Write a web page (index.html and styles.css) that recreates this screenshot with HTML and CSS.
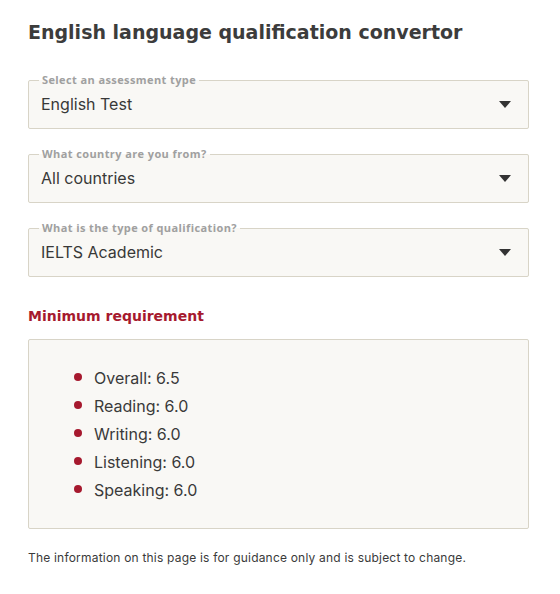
FILE: index.html
```html
<!DOCTYPE html>
<html lang="en">
<head>
<meta charset="utf-8">
<link rel="stylesheet" href="styles.css">
</head>
<body>
<main class="page">
  <h1 class="title">English language qualification convertor</h1>

  <fieldset class="field">
    <legend class="field-label">Select an assessment type</legend>
    <div class="field-row"><span class="field-value">English Test</span><span class="caret"></span></div>
  </fieldset>

  <fieldset class="field">
    <legend class="field-label">What country are you from?</legend>
    <div class="field-row"><span class="field-value">All countries</span><span class="caret"></span></div>
  </fieldset>

  <fieldset class="field">
    <legend class="field-label">What is the type of qualification?</legend>
    <div class="field-row"><span class="field-value">IELTS Academic</span><span class="caret"></span></div>
  </fieldset>

  <h2 class="req-title">Minimum requirement</h2>
  <div class="req-box">
    <ul class="req-list">
      <li>Overall: 6.5</li>
      <li>Reading: 6.0</li>
      <li>Writing: 6.0</li>
      <li>Listening: 6.0</li>
      <li>Speaking: 6.0</li>
    </ul>
  </div>

  <p class="note">The information on this page is for guidance only and is subject to change.</p>
</main>
</body>
</html>
```

FILE: styles.css
```css
html, body {
  margin: 0;
  padding: 0;
  background: #ffffff;
}
body {
  font-family: "Inter", "Liberation Sans", sans-serif;
  color: #3a3a3a;
}
.page {
  padding: 18px 31px 0 28px;
}
.title {
  margin: 0 0 28px 0;
  font-family: "DejaVu Sans", sans-serif;
  font-size: 19px;
  line-height: 28px;
  font-weight: 700;
  color: #3c3c3c;
}
.field {
  margin: 0 0 19px 0;
  padding: 0 17px 0 12px;
  border: 1px solid #d8d4c7;
  border-radius: 2px;
  background: #f9f8f5;
  min-width: 0;
}
.field-label {
  padding: 0 3px;
  margin-left: -2px;
  font-family: "Open Sans", sans-serif;
  font-size: 11px;
  line-height: 12px;
  font-weight: 700;
  letter-spacing: 0.4px;
  color: #a0a0a0;
}
.field-row {
  display: flex;
  align-items: center;
  justify-content: space-between;
  height: 48px;
  margin-top: -6px;
}
.field-value {
  font-size: 16px;
  line-height: 20px;
  color: #383838;
}
.caret {
  width: 0;
  height: 0;
  border-left: 6.5px solid transparent;
  border-right: 6.5px solid transparent;
  border-top: 7px solid #333;
  margin-top: 1px;
}
.req-title {
  margin: 29px 0 13px 0;
  font-family: "DejaVu Sans", sans-serif;
  font-size: 14px;
  line-height: 20px;
  font-weight: 700;
  color: #a6192e;
}
.req-box {
  border: 1px solid #d8d4c7;
  border-radius: 2px;
  background: #f9f8f5;
  padding: 24px 0 24px 0;
}
.req-list {
  margin: 0;
  padding: 0 0 0 45px;
  list-style: none;
}
.req-list li {
  position: relative;
  padding-left: 20px;
  font-size: 16px;
  line-height: 28px;
  color: #3a3a3a;
}
.req-list li::before {
  content: "";
  position: absolute;
  left: 0;
  top: 9px;
  width: 8px;
  height: 8px;
  border-radius: 50%;
  background: #a6192e;
}
.note {
  margin: 21px 0 0 0;
  font-size: 12px;
  line-height: 16px;
  letter-spacing: 0.2px;
  color: #3a3a3a;
}
```
